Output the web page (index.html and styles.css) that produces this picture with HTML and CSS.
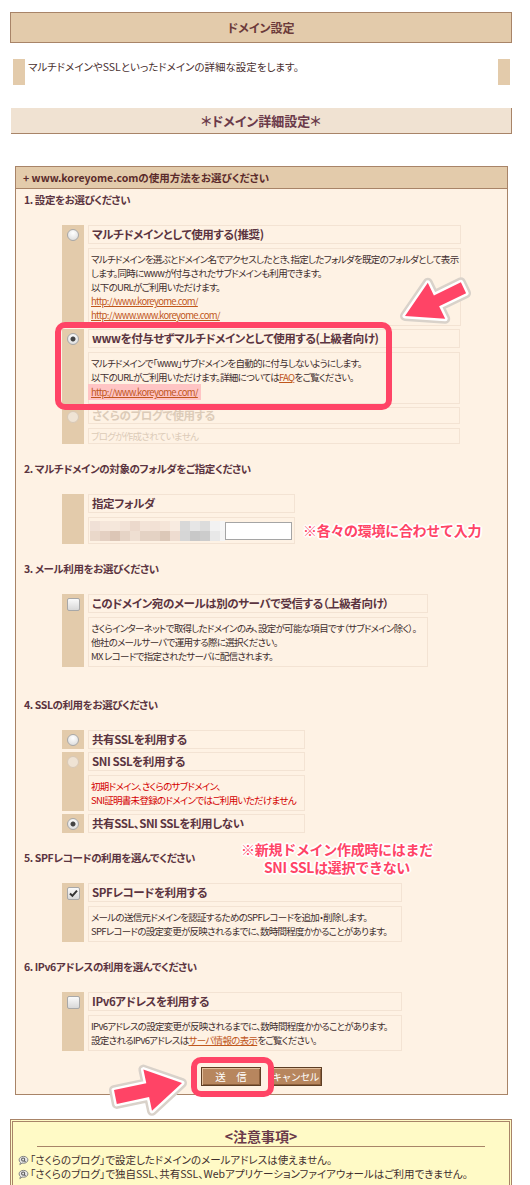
FILE: index.html
```html
<!DOCTYPE html>
<html lang="ja">
<head>
    <meta charset="UTF-8">
    <meta name="viewport" content="width=device-width, initial-scale=1.0">
    <title>ドメイン設定</title>
    <link rel="stylesheet" href="styles.css">
</head>
<body>
<div class="page">
    <h1 class="page-title">ドメイン設定</h1>

    <div class="lead">
        <span class="lead-mark"></span>
        <p class="lead-text">マルチドメインやSSLといったドメインの詳細な設定をします。</p>
        <span class="lead-mark"></span>
    </div>

    <h2 class="sub-title">＊ドメイン詳細設定＊</h2>

    <form class="detail">
        <div class="detail-head">+ www.koreyome.comの使用方法をお選びください</div>
        <div class="detail-body">

            <section class="step">
                <h3 class="step-title">1. 設定をお選びください</h3>
                <div class="opts opts--wide">
                    <div class="opt">
                        <div class="opt-mark"><input type="radio" class="radio" name="use"></div>
                        <div class="opt-main">
                            <div class="opt-label">マルチドメインとして使用する(推奨)</div>
                            <div class="opt-desc">
                                マルチドメインを選ぶとドメイン名でアクセスしたとき、指定したフォルダを既定のフォルダとして表示<br>
                                します。同時にwwwが付与されたサブドメインも利用できます。<br>
                                以下のURLがご利用いただけます。<br>
                                <a href="#">http://www.koreyome.com/</a><br>
                                <a href="#">http://www.www.koreyome.com/</a>
                            </div>
                        </div>
                    </div>
                    <div class="opt">
                        <div class="opt-mark"><input type="radio" class="radio" name="use" checked></div>
                        <div class="opt-main">
                            <div class="opt-label">wwwを付与せずマルチドメインとして使用する(上級者向け)</div>
                            <div class="opt-desc">
                                マルチドメインで「www」サブドメインを自動的に付与しないようにします。<br>
                                以下のURLがご利用いただけます。詳細については<a href="#">FAQ</a>をご覧ください。<br>
                                <span class="hl"><a href="#">http://www.koreyome.com/</a></span>
                            </div>
                        </div>
                    </div>
                    <div class="opt opt--muted">
                        <div class="opt-mark"><input type="radio" class="radio" name="use" disabled></div>
                        <div class="opt-main">
                            <div class="opt-label">さくらのブログで使用する</div>
                            <div class="opt-desc">ブログが作成されていません</div>
                        </div>
                    </div>
                </div>
            </section>

            <section class="step">
                <h3 class="step-title">2. マルチドメインの対象のフォルダをご指定ください</h3>
                <div class="opts opts--folder">
                    <div class="opt">
                        <div class="opt-mark"></div>
                        <div class="opt-main">
                            <div class="opt-label">指定フォルダ</div>
                            <div class="opt-field">
                                <span class="mosaic"></span>
                                <input type="text" class="field-input">
                            </div>
                        </div>
                    </div>
                </div>
            </section>

            <section class="step step--spaced">
                <h3 class="step-title">3. メール利用をお選びください</h3>
                <div class="opts opts--mail">
                    <div class="opt">
                        <div class="opt-mark"><input type="checkbox" class="check"></div>
                        <div class="opt-main">
                            <div class="opt-label">このドメイン宛のメールは別のサーバで受信する（上級者向け）</div>
                            <div class="opt-desc">
                                さくらインターネットで取得したドメインのみ、設定が可能な項目です（サブドメイン除く）。<br>
                                他社のメールサーバで運用する際に選択ください。<br>
                                MX レコードで指定されたサーバに配信されます。
                            </div>
                        </div>
                    </div>
                </div>
            </section>

            <section class="step">
                <h3 class="step-title">4. SSLの利用をお選びください</h3>
                <div class="opts opts--ssl">
                    <div class="opt">
                        <div class="opt-mark"><input type="radio" class="radio" name="ssl"></div>
                        <div class="opt-main">
                            <div class="opt-label">共有SSLを利用する</div>
                        </div>
                    </div>
                    <div class="opt">
                        <div class="opt-mark"><input type="radio" class="radio" name="ssl" disabled></div>
                        <div class="opt-main">
                            <div class="opt-label">SNI SSLを利用する</div>
                            <div class="opt-desc opt-desc--alert">
                                初期ドメイン、さくらのサブドメイン、<br>
                                SNI証明書未登録のドメインではご利用いただけません
                            </div>
                        </div>
                    </div>
                    <div class="opt">
                        <div class="opt-mark"><input type="radio" class="radio" name="ssl" checked></div>
                        <div class="opt-main">
                            <div class="opt-label">共有SSL、SNI SSLを利用しない</div>
                        </div>
                    </div>
                </div>
            </section>

            <section class="step">
                <h3 class="step-title">5. SPFレコードの利用を選んでください</h3>
                <div class="opts opts--spf">
                    <div class="opt">
                        <div class="opt-mark"><input type="checkbox" class="check" checked></div>
                        <div class="opt-main">
                            <div class="opt-label">SPFレコードを利用する</div>
                            <div class="opt-desc">
                                メールの送信元ドメインを認証するためのSPFレコードを追加・削除します。<br>
                                SPFレコードの設定変更が反映されるまでに、数時間程度かかることがあります。
                            </div>
                        </div>
                    </div>
                </div>
            </section>

            <section class="step">
                <h3 class="step-title">6. IPv6アドレスの利用を選んでください</h3>
                <div class="opts opts--spf">
                    <div class="opt">
                        <div class="opt-mark"><input type="checkbox" class="check"></div>
                        <div class="opt-main">
                            <div class="opt-label">IPv6アドレスを利用する</div>
                            <div class="opt-desc">
                                IPv6アドレスの設定変更が反映されるまでに、数時間程度かかることがあります。<br>
                                設定されるIPv6アドレスは<a href="#">サーバ情報の表示</a>をご覧ください。
                            </div>
                        </div>
                    </div>
                </div>
            </section>

            <div class="actions">
                <button type="button" class="btn btn-send">送　信</button>
                <button type="button" class="btn btn-cancel">キャンセル</button>
            </div>
        </div>
    </form>

    <div class="notes">
        <h4 class="notes-title">&lt;注意事項&gt;</h4>
        <ul class="notes-list">
            <li><svg class="notes-icon" viewBox="0 0 12 12"><path d="M6 1.5c2.8 0 4.8 1.7 4.8 3.8S8.8 9 6 9c-.6 0-1.1 0-1.6-.2L2 10.5l.7-2.3C1.8 7.5 1.2 6.5 1.2 5.3 1.2 3.2 3.2 1.5 6 1.5z" fill="#e8e8e8" stroke="#7a7a7a"/><circle cx="5.6" cy="5" r="1.7" fill="none" stroke="#555" stroke-width="1.1"/><path d="M6.8 6.2l1.4 1.4" stroke="#555" stroke-width="1.2"/></svg>「さくらのブログ」で設定したドメインのメールアドレスは使えません。</li>
            <li><svg class="notes-icon" viewBox="0 0 12 12"><path d="M6 1.5c2.8 0 4.8 1.7 4.8 3.8S8.8 9 6 9c-.6 0-1.1 0-1.6-.2L2 10.5l.7-2.3C1.8 7.5 1.2 6.5 1.2 5.3 1.2 3.2 3.2 1.5 6 1.5z" fill="#e8e8e8" stroke="#7a7a7a"/><circle cx="5.6" cy="5" r="1.7" fill="none" stroke="#555" stroke-width="1.1"/><path d="M6.8 6.2l1.4 1.4" stroke="#555" stroke-width="1.2"/></svg>「さくらのブログ」で独自SSL、共有SSL、Webアプリケーションファイアウォールはご利用できません。</li>
        </ul>
    </div>

    <!-- annotations drawn over the screenshot -->
    <div class="frame frame--opt"></div>
    <div class="frame frame--btn"></div>

    <svg class="arrow arrow--down" width="90" height="65" viewBox="0 0 90 65">
        <g transform="translate(5 7)">
            <polygon points="10,44 50.2,46.8 44.1,34.2 71.1,21.2 65.9,10.3 38.9,23.4 32.8,10.8" fill="none" stroke="#d9d2ca" stroke-width="10" stroke-linejoin="round"/>
            <polygon points="10,44 50.2,46.8 44.1,34.2 71.1,21.2 65.9,10.3 38.9,23.4 32.8,10.8" fill="none" stroke="#fff" stroke-width="5" stroke-linejoin="round"/>
            <polygon points="10,44 50.2,46.8 44.1,34.2 71.1,21.2 65.9,10.3 38.9,23.4 32.8,10.8" fill="#ff4466"/>
        </g>
    </svg>

    <svg class="arrow arrow--right" width="90" height="65" viewBox="0 0 90 65">
        <g transform="translate(0 2)">
            <polygon points="77,23 47,50.8 44.1,37.1 11.8,43.9 9,30.1 41.3,23.3 38.4,9.6" fill="none" stroke="#d9d2ca" stroke-width="10" stroke-linejoin="round"/>
            <polygon points="77,23 47,50.8 44.1,37.1 11.8,43.9 9,30.1 41.3,23.3 38.4,9.6" fill="none" stroke="#fff" stroke-width="5" stroke-linejoin="round"/>
            <polygon points="77,23 47,50.8 44.1,37.1 11.8,43.9 9,30.1 41.3,23.3 38.4,9.6" fill="#ff4466"/>
        </g>
    </svg>

    <p class="tag tag--folder">※各々の環境に合わせて入力</p>
    <div class="tag tag--ssl">
        <span class="tag-line">※新規ドメイン作成時にはまだ</span>
        <span class="tag-line">SNI SSLは選択できない</span>
    </div>
</div>
</body>
</html>
```

FILE: styles.css
```css
body {
    margin: 0;
    background: #fff;
    color: #3f2e2e;
    font-family: "Noto Sans CJK JP", "Noto Sans", sans-serif;
    font-size: 9.5px;
    font-feature-settings: "palt";
}

.page {
    position: relative;
    padding: 12px 18px 0 10px;
}

a {
    color: #c0571c;
}

.page-title {
    margin: 0;
    height: 29px;
    line-height: 29px;
    border: 1px solid #a88468;
    background: #e3cbab;
    color: #6b3a3a;
    font-size: 12px;
    text-align: center;
}

.lead {
    display: flex;
    height: 26px;
    margin: 16px 2px 0 3px;
}

.lead-mark {
    width: 12px;
    background: #e3cbab;
}

.lead-text {
    flex: 1;
    margin: 0;
    padding: 1px 0 0 3px;
    line-height: 14px;
    font-size: 10.5px;
    color: #4a3030;
}

.sub-title {
    margin: 23px 0 0 1px;
    height: 25px;
    line-height: 25px;
    background: #f0e2d2;
    border-bottom: 1px solid #a88468;
    border-right: 1px solid #a88468;
    color: #6b3a4a;
    font-size: 13px;
    text-align: center;
}

.detail {
    margin: 32px 4px 0 5px;
    border: 1px solid #a88468;
    background: #fef2e4;
}

.detail-head {
    height: 21px;
    line-height: 21px;
    padding-left: 7px;
    background: #e3cbab;
    border-bottom: 1px solid #a88468;
    color: #5a2a2a;
    font-size: 10.5px;
    font-weight: bold;
}

.detail-body {
    padding: 3px 0 8px 8px;
}

.step + .step {
    margin-top: 17px;
}

.step--spaced {
    padding-bottom: 13px;
}

.step-title {
    margin: 0;
    height: 16px;
    line-height: 16px;
    color: #5b3440;
    font-size: 10.5px;
    letter-spacing: -0.4px;
}

.opts {
    display: flex;
    flex-direction: column;
    gap: 3px;
    margin: 17px 0 0 38px;
}

.opts--wide { width: 398px; }
.opts--folder { width: 233px; }
.opts--mail { width: 366px; }
.opts--ssl { width: 243px; }
.opts--spf { width: 340px; }

.opt {
    display: flex;
    gap: 4px;
}

.opt-mark {
    flex: none;
    width: 22px;
    padding-top: 4px;
    background: #e3cbab;
    display: flex;
    justify-content: center;
    align-items: flex-start;
}

.opt-main {
    flex: 1;
    display: flex;
    flex-direction: column;
    gap: 4px;
}

.opt-label {
    line-height: 17px;
    padding: 0 3px;
    border: 1px solid #f3e3d3;
    color: #5b3440;
    font-size: 11.5px;
    font-weight: bold;
    letter-spacing: -0.4px;
    white-space: nowrap;
}

.opt-desc {
    line-height: 14px;
    padding: 3px 2px;
    border: 1px solid #f3e3d3;
    letter-spacing: -0.7px;
    white-space: nowrap;
}

.opt-desc--alert {
    color: #d40000;
}

.opt--muted .opt-label,
.opt--muted .opt-desc {
    color: #dccbb8;
}

.opt--muted .opt-label {
    line-height: 15px;
}

.opt--muted .opt-desc {
    padding: 0 2px;
}

.hl {
    display: inline-block;
    margin-left: -3px;
    padding: 1px 3px 1px;
    line-height: 14px;
    background: #ffc4c4;
}

.opt-field {
    display: flex;
    align-items: center;
    padding: 3px 1px 2px;
    border: 1px solid #f3e3d3;
}

.mosaic {
    width: 135px;
    height: 20px;
    background:
        linear-gradient(90deg, #f0e0d6 0 10px, #f5e6da 10px 20px, #f5e7db 20px 30px, #f2e2d6 30px 40px, #ecd9cc 40px 50px, #f3e3d7 50px 60px, #f2e1d5 60px 70px, #f5e5d8 70px 80px, #f8ebe0 80px 90px, #d8d8d8 90px 100px, #e6e6e6 100px 110px, #dcdcdc 110px 120px, #f2f2f2 120px 130px, #f6f6f6 130px) top / 100% 50% no-repeat,
        linear-gradient(90deg, #ead8ca 0 10px, #e4d0c2 10px 20px, #dcc6b6 20px 30px, #e6d4c6 30px 40px, #efdfd2 40px 50px, #e4d2c4 50px 70px, #dcc8b8 70px 80px, #eedcd0 80px 90px, #d6d6d6 90px 100px, #c8c8c8 100px 110px, #cccccc 110px 120px, #e8e8e8 120px 130px, #f4f4f4 130px) bottom / 100% 50% no-repeat;
}

.field-input {
    box-sizing: border-box;
    width: 67px;
    height: 18px;
    margin: 0;
    padding: 0 2px;
    border: 1px solid #a5a5a5;
    background: #fff;
}

.radio {
    appearance: none;
    flex: none;
    width: 12px;
    height: 12px;
    margin: 0;
    border: 1px solid #a8a8a8;
    border-radius: 50%;
    background: radial-gradient(circle at 50% 30%, #fff, #d8d8d8);
}

.radio:checked {
    background:
        radial-gradient(circle, #444 0 2px, rgba(68, 68, 68, 0) 3px),
        radial-gradient(circle at 50% 30%, #fff, #d8d8d8);
}

.radio:disabled {
    border-color: #d8c8b6;
    background: #efe3d4;
}

.check {
    appearance: none;
    flex: none;
    width: 13px;
    height: 13px;
    margin: 0;
    border: 1px solid #a8a8a8;
    border-radius: 2px;
    background: linear-gradient(#fafafa, #d8d8d8);
}

.check:checked {
    background:
        url("data:image/svg+xml,%3Csvg xmlns='http://www.w3.org/2000/svg' viewBox='0 0 11 11'%3E%3Cpath d='M2 5.5l2.4 2.4L9 2.6' fill='none' stroke='%23333' stroke-width='2'/%3E%3C/svg%3E") center / 11px 11px no-repeat,
        linear-gradient(#fafafa, #d8d8d8);
}

.actions {
    display: flex;
    justify-content: center;
    gap: 8px;
    margin-top: 16px;
    padding-right: 8px;
}

.btn {
    height: 19px;
    padding: 0;
    border: 1px solid #5e3e24;
    background: #b7865e;
    box-shadow: inset 1px 1px 0 #e2bf9c, inset -1px -1px 0 #8c603c;
    color: #fff;
    font-family: inherit;
    font-size: 10.5px;
    cursor: pointer;
}

.btn-send {
    width: 60px;
}

.btn-cancel {
    width: 53px;
    font-size: 10px;
    letter-spacing: -0.6px;
}

.notes {
    margin-top: 24px;
    height: 70px;
    border: 3px double #a88468;
    background: #fffac6;
    overflow: hidden;
}

.notes-title {
    margin: 0 24px;
    padding-top: 4px;
    line-height: 20px;
    border-bottom: 1px solid #a88468;
    color: #6b3a4a;
    font-size: 14px;
    text-align: center;
}

.notes-list {
    margin: 0;
    padding: 6px 0 0 5px;
    list-style: none;
    line-height: 14px;
    font-size: 10.5px;
    white-space: nowrap;
}

.notes-icon {
    width: 11px;
    height: 11px;
    margin-right: 1px;
    vertical-align: -2px;
}

/* screenshot annotations */
.frame {
    position: absolute;
    box-sizing: border-box;
    border: 6px solid #ff4466;
    border-radius: 10px;
}

.frame--opt {
    left: 55px;
    top: 322px;
    width: 337px;
    height: 88px;
}

.frame--btn {
    left: 191px;
    top: 1057px;
    width: 83px;
    height: 40px;
}

.arrow {
    position: absolute;
}

.arrow--down {
    left: 390px;
    top: 265px;
}

.arrow--right {
    left: 105px;
    top: 1058px;
}

.tag {
    position: absolute;
    margin: 0;
    color: #ff4466;
    font-size: 14px;
    font-weight: bold;
    line-height: 18px;
    letter-spacing: -0.3px;
    font-feature-settings: normal;
    white-space: nowrap;
    text-shadow:
        1px 0 #fff, -1px 0 #fff, 0 1px #fff, 0 -1px #fff,
        1px 1px #fff, -1px -1px #fff, 1px -1px #fff, -1px 1px #fff,
        2px 0 #fff, -2px 0 #fff, 0 2px #fff, 0 -2px #fff;
}

.tag--folder {
    left: 303px;
    top: 521px;
}

.tag--ssl {
    left: 232px;
    top: 840px;
    width: 210px;
    text-align: center;
}

.tag-line {
    display: block;
    height: 18px;
}
```
